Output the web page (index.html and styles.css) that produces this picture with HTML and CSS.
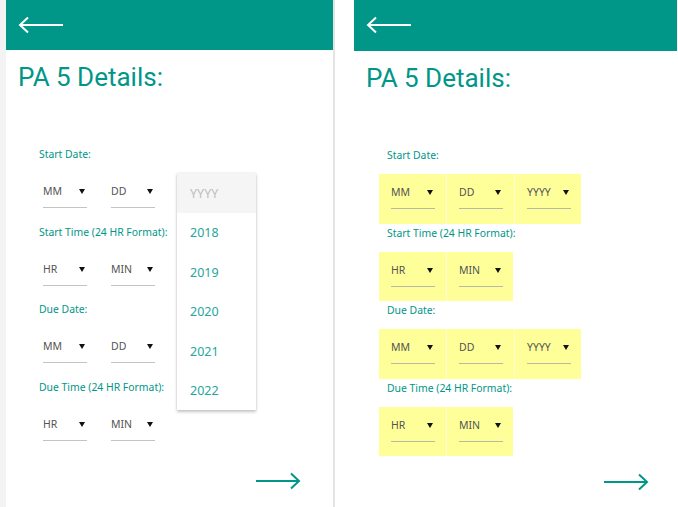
FILE: index.html
```html
<!DOCTYPE html>
<html lang="en">
<head>
<meta charset="utf-8">
<title>PA 5 Details</title>
<link rel="stylesheet" href="styles.css">
</head>
<body>
<div class="screen">
  <div class="edge"></div>

  <section class="phone phone-left">
    <header class="appbar">
      <svg class="back" width="46" height="18" viewBox="0 0 46 18"><path d="M45 9H2M10 1.5L2 9l8 7.5" fill="none" stroke="#fff" stroke-width="2"/></svg>
    </header>
    <h1 class="title">PA 5 Details:</h1>
    <div class="form">
      <div class="label">Start Date:</div>
      <div class="row row-date">
        <div class="cell"><div class="select"><span>MM</span><i class="caret"></i></div></div>
        <div class="cell"><div class="select"><span>DD</span><i class="caret"></i></div></div>
        <div class="cell covered"><div class="select"><span>YYYY</span><i class="caret"></i></div></div>
        <ul class="menu">
          <li class="menu-item placeholder">YYYY</li>
          <li class="menu-item">2018</li>
          <li class="menu-item">2019</li>
          <li class="menu-item">2020</li>
          <li class="menu-item">2021</li>
          <li class="menu-item">2022</li>
        </ul>
      </div>
      <div class="label">Start Time (24 HR Format):</div>
      <div class="row">
        <div class="cell"><div class="select"><span>HR</span><i class="caret"></i></div></div>
        <div class="cell"><div class="select"><span>MIN</span><i class="caret"></i></div></div>
      </div>
      <div class="label">Due Date:</div>
      <div class="row">
        <div class="cell"><div class="select"><span>MM</span><i class="caret"></i></div></div>
        <div class="cell"><div class="select"><span>DD</span><i class="caret"></i></div></div>
        <div class="cell covered"><div class="select"><span>YYYY</span><i class="caret"></i></div></div>
      </div>
      <div class="label">Due Time (24 HR Format):</div>
      <div class="row">
        <div class="cell"><div class="select"><span>HR</span><i class="caret"></i></div></div>
        <div class="cell"><div class="select"><span>MIN</span><i class="caret"></i></div></div>
      </div>
    </div>
    <footer class="footer">
      <svg class="next" width="46" height="18" viewBox="0 0 46 18"><path d="M1 9h43M36 1.5L44 9l-8 7.5" fill="none" stroke="#009688" stroke-width="2"/></svg>
    </footer>
  </section>

  <div class="divider"></div>
  <div class="gap"></div>

  <section class="phone phone-right">
    <header class="appbar">
      <svg class="back" width="46" height="18" viewBox="0 0 46 18"><path d="M45 9H2M10 1.5L2 9l8 7.5" fill="none" stroke="#fff" stroke-width="2"/></svg>
    </header>
    <h1 class="title">PA 5 Details:</h1>
    <div class="form highlight">
      <div class="label">Start Date:</div>
      <div class="row">
        <div class="cell"><div class="select"><span>MM</span><i class="caret"></i></div></div>
        <div class="cell"><div class="select"><span>DD</span><i class="caret"></i></div></div>
        <div class="cell"><div class="select"><span>YYYY</span><i class="caret"></i></div></div>
      </div>
      <div class="label">Start Time (24 HR Format):</div>
      <div class="row">
        <div class="cell"><div class="select"><span>HR</span><i class="caret"></i></div></div>
        <div class="cell"><div class="select"><span>MIN</span><i class="caret"></i></div></div>
      </div>
      <div class="label">Due Date:</div>
      <div class="row">
        <div class="cell"><div class="select"><span>MM</span><i class="caret"></i></div></div>
        <div class="cell"><div class="select"><span>DD</span><i class="caret"></i></div></div>
        <div class="cell"><div class="select"><span>YYYY</span><i class="caret"></i></div></div>
      </div>
      <div class="label">Due Time (24 HR Format):</div>
      <div class="row">
        <div class="cell"><div class="select"><span>HR</span><i class="caret"></i></div></div>
        <div class="cell"><div class="select"><span>MIN</span><i class="caret"></i></div></div>
      </div>
    </div>
    <footer class="footer">
      <svg class="next" width="46" height="18" viewBox="0 0 46 18"><path d="M1 9h43M36 1.5L44 9l-8 7.5" fill="none" stroke="#009688" stroke-width="2"/></svg>
    </footer>
  </section>
</div>
</body>
</html>
```
FILE: styles.css
```css
* { box-sizing: border-box; }

html, body {
  margin: 0;
  padding: 0;
  background: #ffffff;
}

.screen {
  display: flex;
  width: 678px;
  height: 507px;
  overflow: hidden;
  background: #ffffff;
}

.edge {
  flex: 0 0 6px;
  background: #f3f3f3;
}

.divider {
  flex: 0 0 2px;
  background: #e4e4e4;
}

.gap {
  flex: 0 0 19px;
}

.phone {
  display: flex;
  flex-direction: column;
  background: #ffffff;
  height: 507px;
}

.phone-left { flex: 0 0 327px; }
.phone-right { flex: 0 0 323px; }

.appbar {
  background: #009688;
  height: 51px;
  display: flex;
  align-items: center;
  padding-left: 12px;
}

.phone-left .appbar {
  height: 50px;
}

.back {
  display: block;
  margin-top: -1px;
}

.title {
  margin: 12px 0 0 0;
  padding-left: 12px;
  font-family: Roboto, "Noto Sans", sans-serif;
  font-weight: 400;
  font-size: 26px;
  line-height: 30px;
  color: #009688;
}

.form {
  margin-top: 53px;
  margin-left: 25px;
  font-family: "Noto Sans", "Open Sans", sans-serif;
}

.label {
  height: 28px;
  padding: 2px 0 0 8px;
  font-size: 10.4px;
  line-height: 14px;
  color: #009688;
  white-space: nowrap;
}

.row {
  display: flex;
  gap: 1px;
  height: 49.5px;
  width: max-content;
}

.row-date {
  position: relative;
}

.cell {
  width: 67px;
  height: 100%;
  padding: 10px 11px 0 12px;
}

.cell:last-child,
.row-date .cell:nth-child(3) {
  width: 66px;
}

.cell.covered {
  visibility: hidden;
}

.highlight .row {
  background: #fdfdd2;
}

.highlight .cell {
  background: #ffff99;
}

.select {
  width: 44px;
  height: 25px;
  display: flex;
  justify-content: space-between;
  align-items: flex-start;
  padding-right: 2px;
  border-bottom: 1px solid #c4c4c4;
  font-size: 10.5px;
  line-height: 16px;
  color: #555555;
}

.highlight .select {
  border-bottom-color: #b9b9a8;
}

.caret {
  display: block;
  width: 0;
  height: 0;
  margin-top: 6px;
  border-left: 3px solid transparent;
  border-right: 3px solid transparent;
  border-top: 5px solid #111111;
}

.menu {
  position: absolute;
  left: 146px;
  top: 0;
  width: 79px;
  margin: 0;
  padding: 0;
  list-style: none;
  background: #ffffff;
  box-shadow: 0 2px 3px rgba(0, 0, 0, 0.22), 0 0 2px rgba(0, 0, 0, 0.1);
  z-index: 2;
}

.menu-item {
  height: 39.5px;
  display: flex;
  align-items: center;
  padding: 1px 0 0 13px;
  font-size: 12.5px;
  color: #26a69a;
}

.menu-item.placeholder {
  background: #f5f5f5;
  color: #bdbdbd;
}

.footer {
  margin-top: auto;
  display: flex;
  justify-content: flex-end;
  padding: 0 32px 17px 0;
}

.phone-right .footer {
  padding: 0 28px 16px 0;
}

.next {
  display: block;
}
```
